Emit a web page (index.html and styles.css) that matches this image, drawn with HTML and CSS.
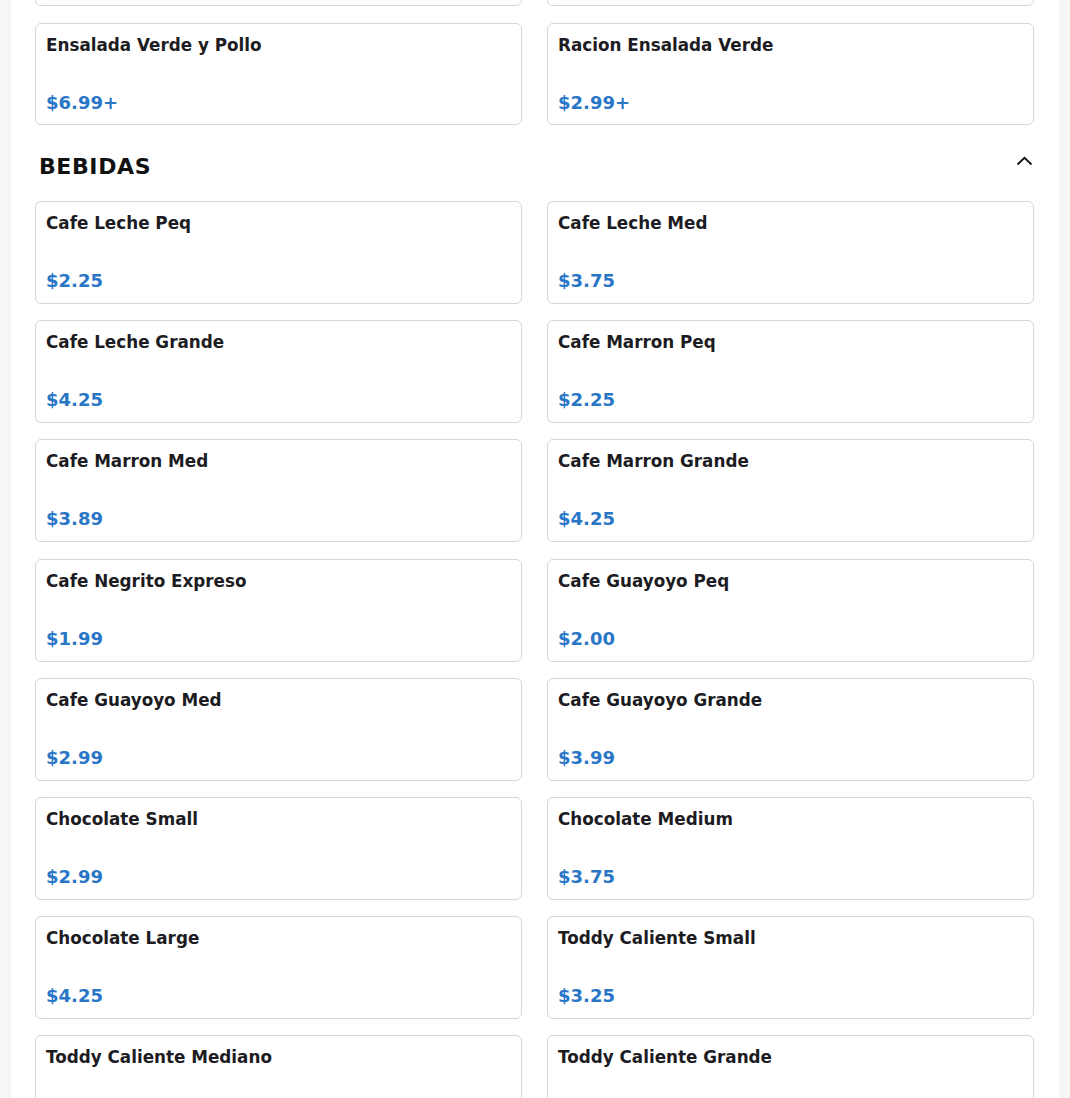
FILE: index.html
```html
<!DOCTYPE html>
<html lang="es">
<head>
<meta charset="utf-8">
<title>Menu</title>
<link rel="stylesheet" href="styles.css">
</head>
<body>
<div class="page">
  <main class="content">
    <div class="grid top-grid">
      <div class="card partial-top"></div>
      <div class="card partial-top"></div>
      <div class="card"><div class="name">Ensalada Verde y Pollo</div><div class="price">$6.99+</div></div>
      <div class="card"><div class="name">Racion Ensalada Verde</div><div class="price">$2.99+</div></div>
    </div>
    <section class="category">
      <div class="cat-head">
        <h2>BEBIDAS</h2>
        <svg class="chev" width="17" height="10" viewBox="0 0 17 10"><path d="M1.5 8.5 L8.5 1.8 L15.5 8.5" fill="none" stroke="#111" stroke-width="1.8"/></svg>
      </div>
      <div class="grid bev-grid">
        <div class="card"><div class="name">Cafe Leche Peq</div><div class="price">$2.25</div></div>
        <div class="card"><div class="name">Cafe Leche Med</div><div class="price">$3.75</div></div>
        <div class="card"><div class="name">Cafe Leche Grande</div><div class="price">$4.25</div></div>
        <div class="card"><div class="name">Cafe Marron Peq</div><div class="price">$2.25</div></div>
        <div class="card"><div class="name">Cafe Marron Med</div><div class="price">$3.89</div></div>
        <div class="card"><div class="name">Cafe Marron Grande</div><div class="price">$4.25</div></div>
        <div class="card"><div class="name">Cafe Negrito Expreso</div><div class="price">$1.99</div></div>
        <div class="card"><div class="name">Cafe Guayoyo Peq</div><div class="price">$2.00</div></div>
        <div class="card"><div class="name">Cafe Guayoyo Med</div><div class="price">$2.99</div></div>
        <div class="card"><div class="name">Cafe Guayoyo Grande</div><div class="price">$3.99</div></div>
        <div class="card"><div class="name">Chocolate Small</div><div class="price">$2.99</div></div>
        <div class="card"><div class="name">Chocolate Medium</div><div class="price">$3.75</div></div>
        <div class="card"><div class="name">Chocolate Large</div><div class="price">$4.25</div></div>
        <div class="card"><div class="name">Toddy Caliente Small</div><div class="price">$3.25</div></div>
        <div class="card"><div class="name">Toddy Caliente Mediano</div><div class="price">$3.50</div></div>
        <div class="card"><div class="name">Toddy Caliente Grande</div><div class="price">$3.99</div></div>
      </div>
    </section>
  </main>
</div>
</body>
</html>
```
FILE: styles.css
```css
html, body {
  margin: 0;
  padding: 0;
  background: #f6f6f7;
  font-family: "DejaVu Sans", sans-serif;
  color: #1c1c22;
  height: 1098px;
  overflow: hidden;
}
.page {
  padding: 0 11px;
}
.content {
  background: #ffffff;
  padding: 0 25px 0 24px;
  min-height: 1098px;
}
.grid {
  display: grid;
  grid-template-columns: 1fr 1fr;
  column-gap: 25px;
  row-gap: 17px;
}
.top-grid {
  margin-top: -96px;
}
.bev-grid {
  row-gap: 16.2px;
}
.card {
  border: 1px solid #d6d6da;
  border-radius: 6px;
  height: 102px;
  padding: 10px 10px 0 10px;
  box-sizing: border-box;
  display: flex;
  flex-direction: column;
  background: #fff;
}
.bev-grid .card {
  height: 103px;
}
.name {
  font-weight: bold;
  font-size: 16.8px;
  line-height: 22px;
}
.price {
  font-weight: bold;
  font-size: 18px;
  line-height: 24px;
  color: #2a76c6;
  margin-top: 35px;
}
.cat-head {
  display: flex;
  justify-content: space-between;
  align-items: flex-start;
  padding: 28px 1px 20px 4px;
}
.cat-head h2 {
  margin: 0;
  font-size: 22px;
  line-height: 28px;
  letter-spacing: 0.6px;
  font-weight: bold;
  color: #111;
}
.chev {
  margin-top: 3px;
}
```
